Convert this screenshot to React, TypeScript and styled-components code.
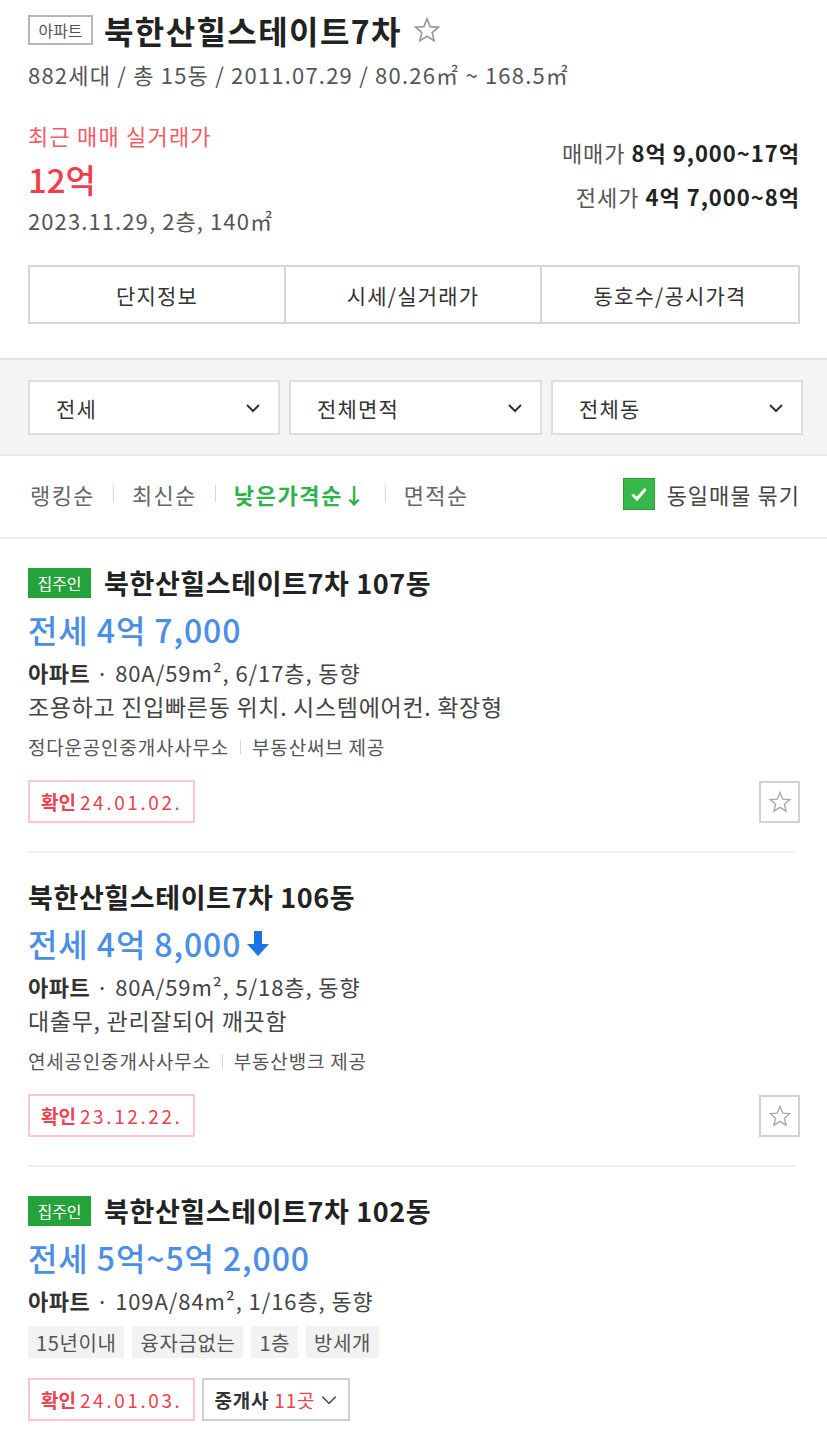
import React from "react";
import styled, { createGlobalStyle } from "styled-components";

const Global = createGlobalStyle`
  html, body { margin: 0; padding: 0; background: #fff; }
  body { font-family: "Noto Sans CJK KR", "Noto Sans", sans-serif; color: #222; }
  * { box-sizing: border-box; }
`;

const Page = styled.div`
  width: 827px;
  background: #fff;
`;

const Header = styled.section`
  padding: 10px 27px 34px 28px;
`;

const TitleRow = styled.div`
  display: flex;
  align-items: center;
  height: 40px;
  gap: 11px;
`;

const TypeBadge = styled.span`
  display: inline-flex;
  align-items: center;
  justify-content: center;
  width: 65px;
  height: 30px;
  border: 2px solid #b5b5b5;
  color: #555;
  font-size: 16px;
  line-height: 1;
`;

const Title = styled.h1`
  margin: 0;
  font-size: 32px;
  font-weight: 700;
  color: #222;
  letter-spacing: 1.4px;
  line-height: 40px;
`;

const Sub = styled.div`
  font-size: 22px;
  line-height: 30px;
  color: #555;
  margin-top: 9px;
  letter-spacing: 1.2px;
`;

const PriceArea = styled.div`
  display: flex;
  justify-content: space-between;
  align-items: center;
  margin-top: 30px;
`;

const LeftCol = styled.div`
  display: flex;
  flex-direction: column;
`;

const RecentLabel = styled.div`
  font-size: 22px;
  line-height: 32px;
  color: #f55b66;
  letter-spacing: 1.2px;
`;

const RecentPrice = styled.div`
  font-size: 33px;
  line-height: 44px;
  margin-top: 6px;
  color: #f23d4b;
  font-weight: 500;
`;

const RecentDate = styled.div`
  font-size: 22px;
  line-height: 32px;
  margin-top: 3px;
  color: #555;
  letter-spacing: 1.1px;
`;

const RightCol = styled.div`
  display: flex;
  flex-direction: column;
  align-items: flex-end;
  margin-top: -8px;
`;

const RangeLine = styled.div`
  font-size: 22px;
  line-height: 44px;
  color: #555;
  letter-spacing: 1px;
  b { color: #222; font-weight: 700; }
`;

const Tabs = styled.div`
  display: grid;
  grid-template-columns: 1fr 1fr 1fr;
  margin-top: 29px;
  border: 2px solid #d6d6d6;
  height: 59px;
`;

const Tab = styled.div<{ $last?: boolean }>`
  display: flex;
  align-items: center;
  justify-content: center;
  font-size: 21px;
  color: #333;
  letter-spacing: 1.2px;
  border-right: ${(p) => (p.$last ? "none" : "2px solid #d6d6d6")};
`;

const FilterBand = styled.div`
  background: #f4f4f4;
  border-top: 2px solid #e2e2e2;
  border-bottom: 2px solid #e8e8e8;
  padding: 20px 27px 19px 28px;
  display: grid;
  grid-template-columns: 252px 253px 252px;
  gap: 9px;
`;

const Select = styled.div`
  height: 55px;
  background: #fff;
  border: 2px solid #dedede;
  display: flex;
  align-items: center;
  justify-content: space-between;
  padding: 0 17px 0 26px;
  font-size: 21px;
  color: #333;
  letter-spacing: 1.2px;
`;

const SortBar = styled.div`
  display: flex;
  align-items: center;
  justify-content: space-between;
  height: 83px;
  padding: 0 27px 6px 30px;
  border-bottom: 2px solid #ececec;
`;

const SortList = styled.div`
  display: flex;
  align-items: center;
  gap: 18px;
`;

const SortItem = styled.span<{ $active?: boolean }>`
  font-size: 22px;
  color: ${(p) => (p.$active ? "#2cb24a" : "#666")};
  font-weight: ${(p) => (p.$active ? 700 : 400)};
  letter-spacing: ${(p) => (p.$active ? "1.6px" : "1.4px")};
`;

const SortSep = styled.span`
  width: 1px;
  height: 17px;
  background: #d8d8d8;
`;

const Bundle = styled.label`
  display: flex;
  align-items: center;
  gap: 12px;
  font-size: 22px;
  color: #444;
  letter-spacing: 1px;
`;

const CheckBox = styled.span`
  width: 32px;
  height: 32px;
  background: #37b94a;
  border: 1px solid #2a9d3a;
  display: inline-flex;
  align-items: center;
  justify-content: center;
`;

const Card = styled.article`
  margin: 0 32px 0 28px;
  padding: 29px 0 28px;
  border-bottom: 2px solid #efefef;
  &:last-child { border-bottom: none; }
`;

const CardTitleRow = styled.div`
  display: flex;
  align-items: center;
  gap: 13px;
  height: 30px;
`;

const OwnerBadge = styled.span`
  display: inline-flex;
  align-items: center;
  justify-content: center;
  width: 63px;
  height: 30px;
  background: #24a33a;
  color: #fff;
  font-size: 16px;
  letter-spacing: 0;
`;

const CardTitle = styled.h2`
  margin: 0;
  font-size: 27px;
  font-weight: 700;
  color: #222;
  letter-spacing: 0.6px;
  line-height: 30px;
`;

const Price = styled.div`
  display: flex;
  align-items: center;
  gap: 5px;
  margin-top: 9px;
  font-size: 32px;
  line-height: 44px;
  color: #4a8ee8;
  font-weight: 500;
  letter-spacing: 0.9px;
`;

const Specs = styled.div`
  margin-top: 5px;
  font-size: 22px;
  line-height: 32px;
  color: #444;
  letter-spacing: 0.9px;
  b { color: #333; font-weight: 700; letter-spacing: 0.5px; }
`;

const Desc = styled.div`
  margin-top: 2px;
  font-size: 23px;
  line-height: 32px;
  color: #444;
  letter-spacing: 0.7px;
`;

const Agency = styled.div`
  margin-top: 12px;
  display: flex;
  align-items: center;
  gap: 11px;
  font-size: 19px;
  line-height: 26px;
  color: #555;
  letter-spacing: 0.8px;
`;

const TinySep = styled.span`
  width: 1px;
  height: 14px;
  background: #d5d5d5;
`;

const Tags = styled.div`
  margin-top: 10px;
  display: flex;
  gap: 8px;
`;

const Tag = styled.span`
  display: inline-flex;
  align-items: center;
  height: 32px;
  padding: 0 8px;
  background: #f2f2f2;
  color: #555;
  font-size: 20px;
  letter-spacing: 0.6px;
`;

const BottomRow = styled.div`
  margin-top: 20px;
  display: flex;
  align-items: center;
  justify-content: space-between;
`;

const BottomLeft = styled.div`
  display: flex;
  gap: 7px;
`;

const Confirm = styled.span`
  display: inline-flex;
  align-items: center;
  gap: 4px;
  height: 43px;
  padding: 0 10px 0 11px;
  border: 2px solid #ffc6cc;
  color: #f0404f;
  font-size: 19px;
  letter-spacing: 2.6px;
  b { font-weight: 700; letter-spacing: 0; }
`;

const Brokers = styled.span`
  display: inline-flex;
  align-items: center;
  gap: 5px;
  height: 43px;
  padding: 0 10px 0 11px;
  border: 2px solid #cfcfcf;
  color: #333;
  font-size: 19px;
  font-weight: 700;
  letter-spacing: 0.8px;
  em { font-style: normal; color: #f0404f; font-weight: 400; }
`;

const StarButton = styled.span`
  width: 41px;
  height: 42px;
  border: 2px solid #d2d2d2;
  display: inline-flex;
  align-items: center;
  justify-content: center;
  margin-right: -5px;
`;

const Star = ({ size = 22, color = "#aaa" }: { size?: number; color?: string }) => (
  <svg width={size} height={size} viewBox="0 0 24 24" fill="none" stroke={color} strokeWidth="1.4" strokeLinejoin="miter">
    <polygon points="12,2.5 14.7,9.1 21.8,9.6 16.4,14.2 18.1,21.2 12,17.4 5.9,21.2 7.6,14.2 2.2,9.6 9.3,9.1" />
  </svg>
);

const Chevron = ({ size = 16, color = "#333", w = 2 }: { size?: number; color?: string; w?: number }) => (
  <svg width={size} height={size} viewBox="0 0 16 16" fill="none" stroke={color} strokeWidth={w}>
    <polyline points="2,5 8,11 14,5" />
  </svg>
);

const DownArrow = () => (
  <svg width="24" height="28" viewBox="0 0 24 28">
    <path d="M8 2h8v13h7L12 27 1 15h7z" fill="#1b74e4" />
  </svg>
);

type Listing = {
  owner?: boolean;
  title: string;
  price: string;
  down?: boolean;
  specs: string;
  desc?: string;
  agency?: [string, string];
  tags?: string[];
  confirm: string;
  brokers?: number;
};

const listings: Listing[] = [
  {
    owner: true,
    title: "북한산힐스테이트7차 107동",
    price: "전세 4억 7,000",
    specs: "80A/59m², 6/17층, 동향",
    desc: "조용하고 진입빠른동 위치. 시스템에어컨. 확장형",
    agency: ["정다운공인중개사사무소", "부동산써브 제공"],
    confirm: "24.01.02.",
  },
  {
    title: "북한산힐스테이트7차 106동",
    price: "전세 4억 8,000",
    down: true,
    specs: "80A/59m², 5/18층, 동향",
    desc: "대출무, 관리잘되어 깨끗함",
    agency: ["연세공인중개사사무소", "부동산뱅크 제공"],
    confirm: "23.12.22.",
  },
  {
    owner: true,
    title: "북한산힐스테이트7차 102동",
    price: "전세 5억~5억 2,000",
    specs: "109A/84m², 1/16층, 동향",
    tags: ["15년이내", "융자금없는", "1층", "방세개"],
    confirm: "24.01.03.",
    brokers: 11,
  },
];

export default function App() {
  return (
    <Page>
      <Global />
      <Header>
        <TitleRow>
          <TypeBadge>아파트</TypeBadge>
          <Title>북한산힐스테이트7차</Title>
          <Star size={28} color="#999" />
        </TitleRow>
        <Sub>882세대 / 총 15동 / 2011.07.29 / 80.26㎡ ~ 168.5㎡</Sub>
        <PriceArea>
          <LeftCol>
            <RecentLabel>최근 매매 실거래가</RecentLabel>
            <RecentPrice>12억</RecentPrice>
            <RecentDate>2023.11.29, 2층, 140㎡</RecentDate>
          </LeftCol>
          <RightCol>
            <RangeLine>
              매매가 <b>8억 9,000~17억</b>
            </RangeLine>
            <RangeLine>
              전세가 <b>4억 7,000~8억</b>
            </RangeLine>
          </RightCol>
        </PriceArea>
        <Tabs>
          <Tab>단지정보</Tab>
          <Tab>시세/실거래가</Tab>
          <Tab $last>동호수/공시가격</Tab>
        </Tabs>
      </Header>

      <FilterBand>
        <Select>
          전세 <Chevron />
        </Select>
        <Select>
          전체면적 <Chevron />
        </Select>
        <Select>
          전체동 <Chevron />
        </Select>
      </FilterBand>

      <SortBar>
        <SortList>
          <SortItem>랭킹순</SortItem>
          <SortSep />
          <SortItem>최신순</SortItem>
          <SortSep />
          <SortItem $active>낮은가격순↓</SortItem>
          <SortSep />
          <SortItem>면적순</SortItem>
        </SortList>
        <Bundle>
          <CheckBox>
            <svg width="20" height="20" viewBox="0 0 20 20" fill="none" stroke="#fff" strokeWidth="3">
              <polyline points="3.5,10.5 8,15 16.5,5" />
            </svg>
          </CheckBox>
          동일매물 묶기
        </Bundle>
      </SortBar>

      {listings.map((l, i) => (
        <Card key={i}>
          <CardTitleRow>
            {l.owner && <OwnerBadge>집주인</OwnerBadge>}
            <CardTitle>{l.title}</CardTitle>
          </CardTitleRow>
          <Price>
            {l.price}
            {l.down && <DownArrow />}
          </Price>
          <Specs>
            <b>아파트</b> · {l.specs}
          </Specs>
          {l.desc && <Desc>{l.desc}</Desc>}
          {l.agency && (
            <Agency>
              {l.agency[0]}
              <TinySep />
              {l.agency[1]}
            </Agency>
          )}
          {l.tags && (
            <Tags>
              {l.tags.map((t) => (
                <Tag key={t}>{t}</Tag>
              ))}
            </Tags>
          )}
          <BottomRow>
            <BottomLeft>
              <Confirm>
                <b>확인</b>
                {l.confirm}
              </Confirm>
              {l.brokers && (
                <Brokers>
                  중개사 <em>{l.brokers}곳</em>
                  <Chevron size={18} color="#555" w={1.4} />
                </Brokers>
              )}
            </BottomLeft>
            {!l.brokers && (
              <StarButton>
                <Star size={24} color="#aaa" />
              </StarButton>
            )}
          </BottomRow>
        </Card>
      ))}
    </Page>
  );
}
